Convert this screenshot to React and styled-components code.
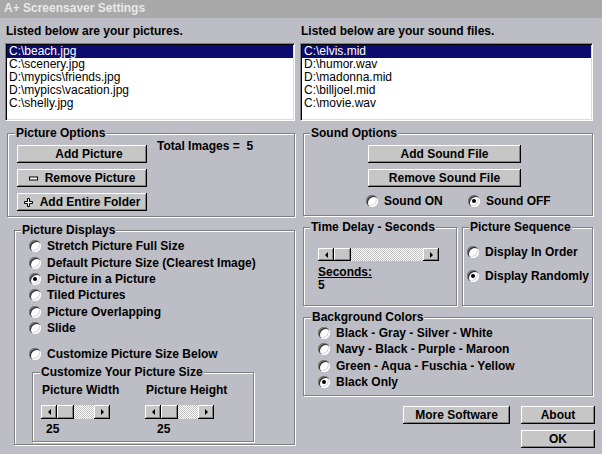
import React from 'react'
import styled, { createGlobalStyle } from 'styled-components'

const BG = '#bdbdc5'

const GlobalStyle = createGlobalStyle`
  html, body {
    margin: 0;
    padding: 0;
    background: ${BG};
  }
  body {
    font-family: 'Liberation Sans', Arial, sans-serif;
    font-size: 12px;
    font-weight: bold;
    color: #000;
  }
  * { box-sizing: border-box; }
`

const pictures = [
  'C:\\beach.jpg',
  'C:\\scenery.jpg',
  'D:\\mypics\\friends.jpg',
  'D:\\mypics\\vacation.jpg',
  'C:\\shelly.jpg',
]
const sounds = [
  'C:\\elvis.mid',
  'D:\\humor.wav',
  'D:\\madonna.mid',
  'C:\\billjoel.mid',
  'C:\\movie.wav',
]
const displays = [
  ['Stretch Picture Full Size', false],
  ['Default Picture Size (Clearest Image)', false],
  ['Picture in a Picture', true],
  ['Tiled Pictures', false],
  ['Picture Overlapping', false],
  ['Slide', false],
]
const colors = [
  ['Black - Gray - Silver - White', false],
  ['Navy - Black - Purple - Maroon', false],
  ['Green - Aqua - Fuschia - Yellow', false],
  ['Black Only', true],
]

function Radio({ checked, h, children }) {
  return (
    <Option $h={h}>
      <Dot $on={checked} />
      {children}
    </Option>
  )
}

function ScrollBar({ w, h }) {
  return (
    <Scroll $w={w} $h={h}>
      <ScrollPart $w={16}>
        <Arrow $dir="left" />
      </ScrollPart>
      <ScrollPart $w={17} />
      <Track />
      <ScrollPart $w={16}>
        <Arrow $dir="right" />
      </ScrollPart>
    </Scroll>
  )
}

const MinusIcon = () => (
  <svg width="9" height="5" viewBox="0 0 9 5">
    <rect x="0.5" y="1" width="8" height="3" fill="#fff" stroke="#000" />
  </svg>
)
const PlusIcon = () => (
  <svg width="9" height="9" viewBox="0 0 9 9">
    <path d="M3.5 0.5h2v3h3v2h-3v3h-2v-3h-3v-2h3z" fill="#fff" stroke="#000" />
  </svg>
)

export default function App() {
  return (
    <>
      <GlobalStyle />
      <Window>
        <TitleBar>A+ Screensaver Settings</TitleBar>
        <Body>
          <Column $w={290}>
            <Label>Listed below are your pictures.</Label>
            <ListBox>
              {pictures.map((p, i) => (
                <ListItem key={p} $selected={i === 0}>{p}</ListItem>
              ))}
            </ListBox>

            <Group $mt={12} $ml={2} $w={288} $pb={5}>
              <Caption $x={7}>Picture Options</Caption>
              <OptRow>
                <BtnStack>
                  <Button $w={130} $pl={14}>Add Picture</Button>
                  <Button $w={130}><MinusIcon />Remove Picture</Button>
                  <Button $w={130}><PlusIcon />Add Entire Folder</Button>
                </BtnStack>
                <Total>Total Images =  5</Total>
              </OptRow>
            </Group>

            <Group $mt={13} $ml={9} $w={281} $pb={2}>
              <Caption $x={6}>Picture Displays</Caption>
              <RadioList $pl={14} $mt={1}>
                {displays.map(([t, on]) => (
                  <Radio key={t} checked={on} h={16.4}>{t}</Radio>
                ))}
                <CustomRow>
                  <Radio h={16}>Customize Picture Size Below</Radio>
                </CustomRow>
              </RadioList>

              <Group $mt={10} $ml={17} $w={222} $pb={5}>
                <Caption $x={7}>Customize Your Picture Size</Caption>
                <SizeGrid>
                  <SizeCol>
                    <ColLabel>Picture Width</ColLabel>
                    <ScrollWrap><ScrollBar w={69} h={14} /></ScrollWrap>
                    <Value $x={5}>25</Value>
                  </SizeCol>
                  <SizeCol>
                    <ColLabel>Picture Height</ColLabel>
                    <ScrollWrap><ScrollBar w={69} h={14} /></ScrollWrap>
                    <Value $x={12}>25</Value>
                  </SizeCol>
                </SizeGrid>
              </Group>
            </Group>
          </Column>

          <Column $w={295}>
            <Label>Listed below are your sound files.</Label>
            <ListBox $w={293}>
              {sounds.map((s, i) => (
                <ListItem key={s} $selected={i === 0}>{s}</ListItem>
              ))}
            </ListBox>

            <Group $mt={12} $ml={3} $w={290} $pb={6}>
              <Caption $x={6}>Sound Options</Caption>
              <SoundBtns>
                <Button $w={153}>Add Sound File</Button>
                <Button $w={153}>Remove Sound File</Button>
              </SoundBtns>
              <SoundRadios>
                <RadioCell $w={102}><Radio h={16}>Sound ON</Radio></RadioCell>
                <RadioCell><Radio checked h={16}>Sound OFF</Radio></RadioCell>
              </SoundRadios>
            </Group>

            <SplitRow>
              <Group $w={154} $h={79}>
                <Caption $x={6}>Time Delay - Seconds</Caption>
                <DelayBody>
                  <ScrollBar w={121} h={13} />
                  <Seconds>Seconds:</Seconds>
                  <SecondsValue>5</SecondsValue>
                </DelayBody>
              </Group>
              <Group $w={131} $h={79}>
                <Caption $x={6}>Picture Sequence</Caption>
                <RadioList $pl={4} $mt={10} $gap={8}>
                  <Radio h={16}>Display In Order</Radio>
                  <Radio checked h={16}>Display Randomly</Radio>
                </RadioList>
              </Group>
            </SplitRow>

            <Group $mt={11} $ml={3} $w={290} $pb={5}>
              <Caption $x={7}>Background Colors</Caption>
              <RadioList $pl={14} $mt={1}>
                {colors.map(([t, on]) => (
                  <Radio key={t} checked={on} h={16.3}>{t}</Radio>
                ))}
              </RadioList>
            </Group>

            <BtnArea>
              <BtnRow>
                <Button $w={107}>More Software</Button>
                <Button $w={74}>About</Button>
              </BtnRow>
              <Button $w={74}>OK</Button>
            </BtnArea>
          </Column>
        </Body>
      </Window>
    </>
  )
}

const Window = styled.div`
  width: 602px;
  height: 454px;
  overflow: hidden;
  background: ${BG};
`
const TitleBar = styled.div`
  height: 18px;
  line-height: 17px;
  padding-left: 4px;
  background: #a9a9a9;
  color: #e8e8e8;
`
const Body = styled.div`
  display: flex;
  gap: 5px;
  padding: 6px 0 0 5px;
`
const Column = styled.div`
  display: flex;
  flex-direction: column;
  align-items: flex-start;
  width: ${p => p.$w}px;
`
const Label = styled.div`
  height: 14px;
  line-height: 14px;
  padding-left: 1px;
`
const ListBox = styled.div`
  margin-top: 5px;
  width: ${p => p.$w || 290}px;
  height: 78px;
  padding: 1px 1px 0;
  background: #fff;
  border: 1px solid;
  border-color: #808080 #fff #fff #808080;
  box-shadow: inset 1px 1px #000, inset -1px -1px #dcdcdc;
  font-weight: normal;
`
const ListItem = styled.div`
  height: 13px;
  line-height: 13px;
  padding-left: 2px;
  background: ${p => (p.$selected ? '#0c0c6c' : 'transparent')};
  color: ${p => (p.$selected ? '#fff' : '#000')};
`
const Group = styled.div`
  margin-top: ${p => p.$mt || 0}px;
  margin-left: ${p => p.$ml || 0}px;
  width: ${p => p.$w}px;
  ${p => p.$h && `height: ${p.$h}px;`}
  padding-bottom: ${p => p.$pb || 0}px;
  border: 1px solid #808080;
  box-shadow: 1px 1px 0 #fff, inset 1px 1px 0 #fff;
`
const Caption = styled.div`
  width: fit-content;
  height: 14px;
  line-height: 14px;
  margin: -8px 0 0 ${p => p.$x}px;
  padding: 0 1px;
  background: ${BG};
`
const OptRow = styled.div`
  display: flex;
  align-items: flex-start;
  margin-top: 5px;
  padding-left: 9px;
`
const BtnStack = styled.div`
  display: flex;
  flex-direction: column;
  gap: 6px;
`
const Button = styled.button`
  display: flex;
  align-items: center;
  justify-content: center;
  gap: 7px;
  width: ${p => p.$w}px;
  height: 18px;
  padding: 0 0 0 ${p => p.$pl || 0}px;
  border: none;
  background: #c6c6c6;
  box-shadow: inset -1px -1px #000, inset 1px 1px #fff, inset -2px -2px #808080;
  font: inherit;
  color: #000;
  line-height: 1;
`
const Total = styled.div`
  margin: -6px 0 0 10px;
  line-height: 14px;
  white-space: pre;
`
const RadioList = styled.div`
  display: flex;
  flex-direction: column;
  gap: ${p => p.$gap || 0}px;
  margin-top: ${p => p.$mt || 0}px;
  padding-left: ${p => p.$pl}px;
`
const Option = styled.div`
  display: flex;
  align-items: center;
  gap: 6px;
  height: ${p => p.$h}px;
  white-space: nowrap;
`
const Dot = styled.span`
  position: relative;
  flex: none;
  width: 12px;
  height: 12px;
  border-radius: 50%;
  background: #fff;
  box-shadow: inset 1px 1px 0 #808080, inset 2px 2px 0 #303030,
    inset -1px -1px 0 #fff, inset -2px -2px 0 #dcdcdc;
  &::after {
    content: '';
    display: ${p => (p.$on ? 'block' : 'none')};
    position: absolute;
    left: 4px;
    top: 4px;
    width: 4px;
    height: 4px;
    border-radius: 50%;
    background: #000;
  }
`
const CustomRow = styled.div`
  margin-top: 10px;
`
const SizeGrid = styled.div`
  display: grid;
  grid-template-columns: 104px auto;
  margin-top: 4px;
  padding-left: 8px;
`
const SizeCol = styled.div`
  display: flex;
  flex-direction: column;
`
const ColLabel = styled.div`
  line-height: 14px;
  padding-left: 1px;
`
const ScrollWrap = styled.div`
  margin-top: 8px;
`
const Value = styled.div`
  margin-top: 3px;
  line-height: 14px;
  padding-left: ${p => p.$x}px;
`
const Scroll = styled.div`
  display: flex;
  width: ${p => p.$w}px;
  height: ${p => p.$h}px;
  background: repeating-conic-gradient(#fff 0 25%, #c0c0c0 0 50%) 0 0 / 2px 2px;
`
const ScrollPart = styled.div`
  display: flex;
  align-items: center;
  justify-content: center;
  flex: none;
  width: ${p => p.$w}px;
  height: 100%;
  background: #c6c6c6;
  box-shadow: inset -1px -1px #000, inset 1px 1px #fff, inset -2px -2px #808080;
`
const Track = styled.div`
  flex: 1;
`
const Arrow = styled.span`
  width: 0;
  height: 0;
  border-top: 3px solid transparent;
  border-bottom: 3px solid transparent;
  ${p => (p.$dir === 'left' ? 'border-right: 3px solid #000;' : 'border-left: 3px solid #000;')}
`
const SoundBtns = styled.div`
  display: flex;
  flex-direction: column;
  gap: 6px;
  margin-top: 5px;
  padding-left: 64px;
`
const SoundRadios = styled.div`
  display: flex;
  margin-top: 6px;
  padding-left: 62px;
`
const RadioCell = styled.div`
  ${p => p.$w && `width: ${p.$w}px;`}
`
const SplitRow = styled.div`
  display: flex;
  gap: 5px;
  margin: 11px 0 0 3px;
`
const DelayBody = styled.div`
  display: flex;
  flex-direction: column;
  margin-top: 14px;
  padding-left: 14px;
`
const Seconds = styled.div`
  margin-top: 5px;
  line-height: 13px;
  text-decoration: underline;
`
const SecondsValue = styled.div`
  line-height: 13px;
`
const BtnArea = styled.div`
  display: flex;
  flex-direction: column;
  align-items: flex-end;
  gap: 6px;
  width: 100%;
  margin-top: 10px;
`
const BtnRow = styled.div`
  display: flex;
  gap: 11px;
`
